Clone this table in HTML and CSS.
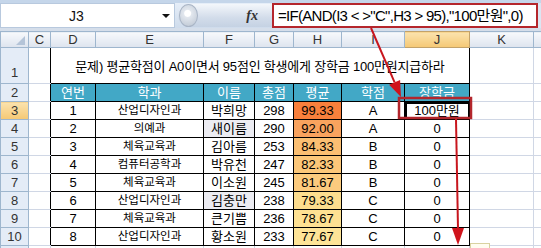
FILE: index.html
```html
<!DOCTYPE html>
<html lang="ko">
<head>
<meta charset="utf-8">
<link rel="stylesheet" href="styles.css">
</head>
<body>
<div class="app">
  <div class="fbar">
    <div class="namebox"><span class="nm">J3</span><span class="dd"></span></div>
    <div class="mid"><div class="pill"><span class="bulb"></span><span class="fx">fx</span></div></div>
    <div class="formula">=IF(AND(I3 &lt; &gt;"C",H3 &gt; 95),"100만원",0)</div>
  </div>
  <div class="sep"></div>
  <table class="sheet">
    <colgroup>
      <col class="w-rh"><col class="w-c"><col class="w-d"><col class="w-e"><col class="w-f"><col class="w-g"><col class="w-h"><col class="w-i"><col class="w-j"><col class="w-k"><col class="w-l">
    </colgroup>
    <tr class="hdr">
      <th class="corner"><span class="tri"></span></th><th>C</th><th>D</th><th>E</th><th>F</th><th>G</th><th>H</th><th>I</th><th class="sel">J</th><th>K</th><th></th>
    </tr>
    <tr class="r1">
      <th class="rh">1</th><td class="cb"></td><td class="title" colspan="7">문제) 평균학점이 A0이면서 95점인 학생에게 장학금 100만원지급하라</td><td></td><td></td>
    </tr>
    <tr class="r">
      <th class="rh">2</th><td class="cb"></td><td class="th">연번</td><td class="th">학과</td><td class="th">이름</td><td class="th">총점</td><td class="th">평균</td><td class="th">학점</td><td class="th">장학금</td><td></td><td></td>
    </tr>
    <tr class="r">
      <th class="rh sel">3</th><td class="cb"></td><td class="d">1</td><td class="d dept">산업디자인과</td><td class="d">박희망</td><td class="d">298</td><td class="d h1">99.33</td><td class="d">A</td><td class="d active">100만원</td><td></td><td></td>
    </tr>
    <tr class="r">
      <th class="rh">4</th><td class="cb"></td><td class="d">2</td><td class="d dept">의예과</td><td class="d dup">새이름</td><td class="d">290</td><td class="d h2">92.00</td><td class="d">A</td><td class="d">0</td><td></td><td></td>
    </tr>
    <tr class="r">
      <th class="rh">5</th><td class="cb"></td><td class="d">3</td><td class="d dept">체육교육과</td><td class="d">김아름</td><td class="d">253</td><td class="d h3">84.33</td><td class="d">B</td><td class="d">0</td><td></td><td></td>
    </tr>
    <tr class="r">
      <th class="rh">6</th><td class="cb"></td><td class="d">4</td><td class="d dept">컴퓨터공학과</td><td class="d">박유천</td><td class="d">247</td><td class="d h4">82.33</td><td class="d">B</td><td class="d">0</td><td></td><td></td>
    </tr>
    <tr class="r">
      <th class="rh">7</th><td class="cb"></td><td class="d">5</td><td class="d dept">체육교육과</td><td class="d">이소원</td><td class="d">245</td><td class="d h5">81.67</td><td class="d">B</td><td class="d">0</td><td></td><td></td>
    </tr>
    <tr class="r">
      <th class="rh">8</th><td class="cb"></td><td class="d">6</td><td class="d dept">산업디자인과</td><td class="d dup">김충만</td><td class="d">238</td><td class="d h6">79.33</td><td class="d">C</td><td class="d">0</td><td></td><td></td>
    </tr>
    <tr class="r">
      <th class="rh">9</th><td class="cb"></td><td class="d">7</td><td class="d dept">체육교육과</td><td class="d">큰기쁨</td><td class="d">236</td><td class="d h7">78.67</td><td class="d">C</td><td class="d">0</td><td></td><td></td>
    </tr>
    <tr class="r">
      <th class="rh">10</th><td class="cb"></td><td class="d">8</td><td class="d dept">산업디자인과</td><td class="d">황소원</td><td class="d">233</td><td class="d h8">77.67</td><td class="d">C</td><td class="d">0</td><td></td><td></td>
    </tr>
    <tr class="r">
      <th class="rh"></th><td></td><td></td><td></td><td></td><td></td><td></td><td></td><td></td><td></td><td></td>
    </tr>
  </table>
  <svg class="anno" width="541" height="248" viewBox="0 0 541 248">
    <line x1="371" y1="28" x2="394.6" y2="82.3" stroke="#c8161e" stroke-width="2"/>
    <polygon points="401,97 400.1,79.9 389.1,84.7" fill="#d0141c"/>
    <rect x="399" y="98" width="72" height="20" fill="none" stroke="#b3262c" stroke-width="2.5"/>
    <line x1="456" y1="119" x2="458" y2="229" stroke="#c8161e" stroke-width="2"/>
    <polygon points="452,228 464,228 458,245" fill="#d0141c"/>
    <rect x="470.5" y="243.5" width="19" height="8" fill="#fffdf0" stroke="#d9d2a0" stroke-width="1"/>
  </svg>
</div>
</body>
</html>
```
FILE: styles.css
```css
html, body {
  margin: 0;
  padding: 0;
  background: #ffffff;
}
.app {
  position: relative;
  width: 541px;
  height: 248px;
  overflow: hidden;
  font-family: "Liberation Sans", "Noto Sans CJK KR", sans-serif;
}
.fbar {
  display: flex;
  height: 25px;
  border-top: 3px solid #c5d6ea;
  background: #dbe6f3;
}
.namebox {
  width: 175px;
  box-sizing: border-box;
  background: #fff;
  border: 1px solid #b8c9de;
  display: flex;
  align-items: center;
}
.nm {
  flex: 1;
  text-align: center;
  font-size: 14px;
  color: #111;
  padding-right: 10px;
}
.dd {
  width: 0;
  height: 0;
  border-left: 4px solid transparent;
  border-right: 4px solid transparent;
  border-top: 4px solid #111;
  margin-right: 4px;
}
.mid {
  width: 97px;
  display: flex;
  align-items: center;
  background: linear-gradient(#e6eef8, #cfdcec);
}
.pill {
  margin-left: 3px;
  flex: 1;
  height: 23px;
  border-radius: 12px 0 0 12px;
  background: linear-gradient(#f4f7fb, #d2dcea 60%, #c5d2e3);
  display: flex;
  align-items: center;
  justify-content: space-between;
}
.bulb {
  width: 17px;
  height: 21px;
  margin-left: 1px;
  border-radius: 50%;
  background: radial-gradient(circle at 45% 40%, #ffffff 0 3px, #e2e7ee 4px, #b9c3d0 100%);
  border: 1px solid #a9b5c6;
}
.fx {
  font-family: "Liberation Serif", serif;
  font-style: italic;
  font-weight: bold;
  font-size: 14px;
  color: #333;
  margin-right: 14px;
}
.formula {
  flex: 1;
  margin-right: 3px;
  box-sizing: border-box;
  background: #fff;
  border: 2px solid #b5262c;
  font-size: 15px;
  letter-spacing: -0.7px;
  line-height: 21px;
  padding-left: 4px;
  white-space: nowrap;
  overflow: hidden;
  color: #000;
}
.sep {
  height: 3px;
  background: #d5deea;
}
.sheet {
  border-collapse: collapse;
  table-layout: fixed;
  width: 563px;
}
.w-rh { width: 28px; }
.w-c { width: 22px; }
.w-d { width: 45px; }
.w-e { width: 108px; }
.w-f { width: 51px; }
.w-g { width: 39px; }
.w-h { width: 48px; }
.w-i { width: 63px; }
.w-j { width: 65px; }
.w-k { width: 64px; }
.w-l { width: 30px; }
.sheet td, .sheet th {
  border: 1px solid #d0d7e5;
  padding: 0;
  font-size: 12px;
  font-weight: normal;
  text-align: center;
  white-space: nowrap;
  overflow: hidden;
  color: #000;
}
.hdr th {
  height: 15px;
  line-height: 15px;
  background: linear-gradient(#f7f9fc, #dde4ee);
  border-color: #9eb6ce;
  color: #333;
  font-size: 13px;
}
.hdr th.sel {
  background: linear-gradient(#fbe3ae, #f5c874);
  border-color: #c2a26a;
}
.corner {
  position: relative;
}
.tri {
  position: absolute;
  right: 3px;
  bottom: 2px;
  width: 0;
  height: 0;
  border-left: 9px solid transparent;
  border-bottom: 9px solid #b4c4d8;
}
.sheet th.rh {
  background: #e4ecf7;
  border-color: #9eb6ce;
  color: #333;
  font-size: 13px;
}
.sheet th.rh.sel {
  background: linear-gradient(#fbe3ae, #f5c874);
}
.r1 td, .r1 th {
  height: 35px;
}
.r1 th.rh {
  vertical-align: bottom;
  line-height: 20px;
}
.r td, .r th {
  height: 17px;
  line-height: 17px;
}
.sheet td.cb {
  border-right: 1px solid #000;
}
.sheet td.title {
  border-left: 1px solid #000;
  border-right: 1px solid #000;
  border-bottom: 1px solid #000;
  font-size: 13px;
  letter-spacing: -0.2px;
  text-align: center;
}
.sheet td.th {
  background: #42a8c6;
  color: #fff;
  border: 1px solid #000;
  font-size: 13px;
}
.sheet td.d {
  border: 1px solid #000;
  font-size: 13px;
}
.sheet td.dept {
  font-size: 11.5px;
}
.sheet td.dup {
  background: #ececf2;
}
.sheet td.active {
  box-shadow: inset 2px 2px 0 #000, inset -1px -1px 0 #000;
}
.h1 { background: #f8803c; }
.h2 { background: #f9a35e; }
.h3 { background: #fbbf72; }
.h4 { background: #fcc779; }
.h5 { background: #fccb7e; }
.h6 { background: #fddd8e; }
.h7 { background: #fee192; }
.h8 { background: #fee497; }
.anno {
  position: absolute;
  left: 0;
  top: 0;
  pointer-events: none;
}
```
